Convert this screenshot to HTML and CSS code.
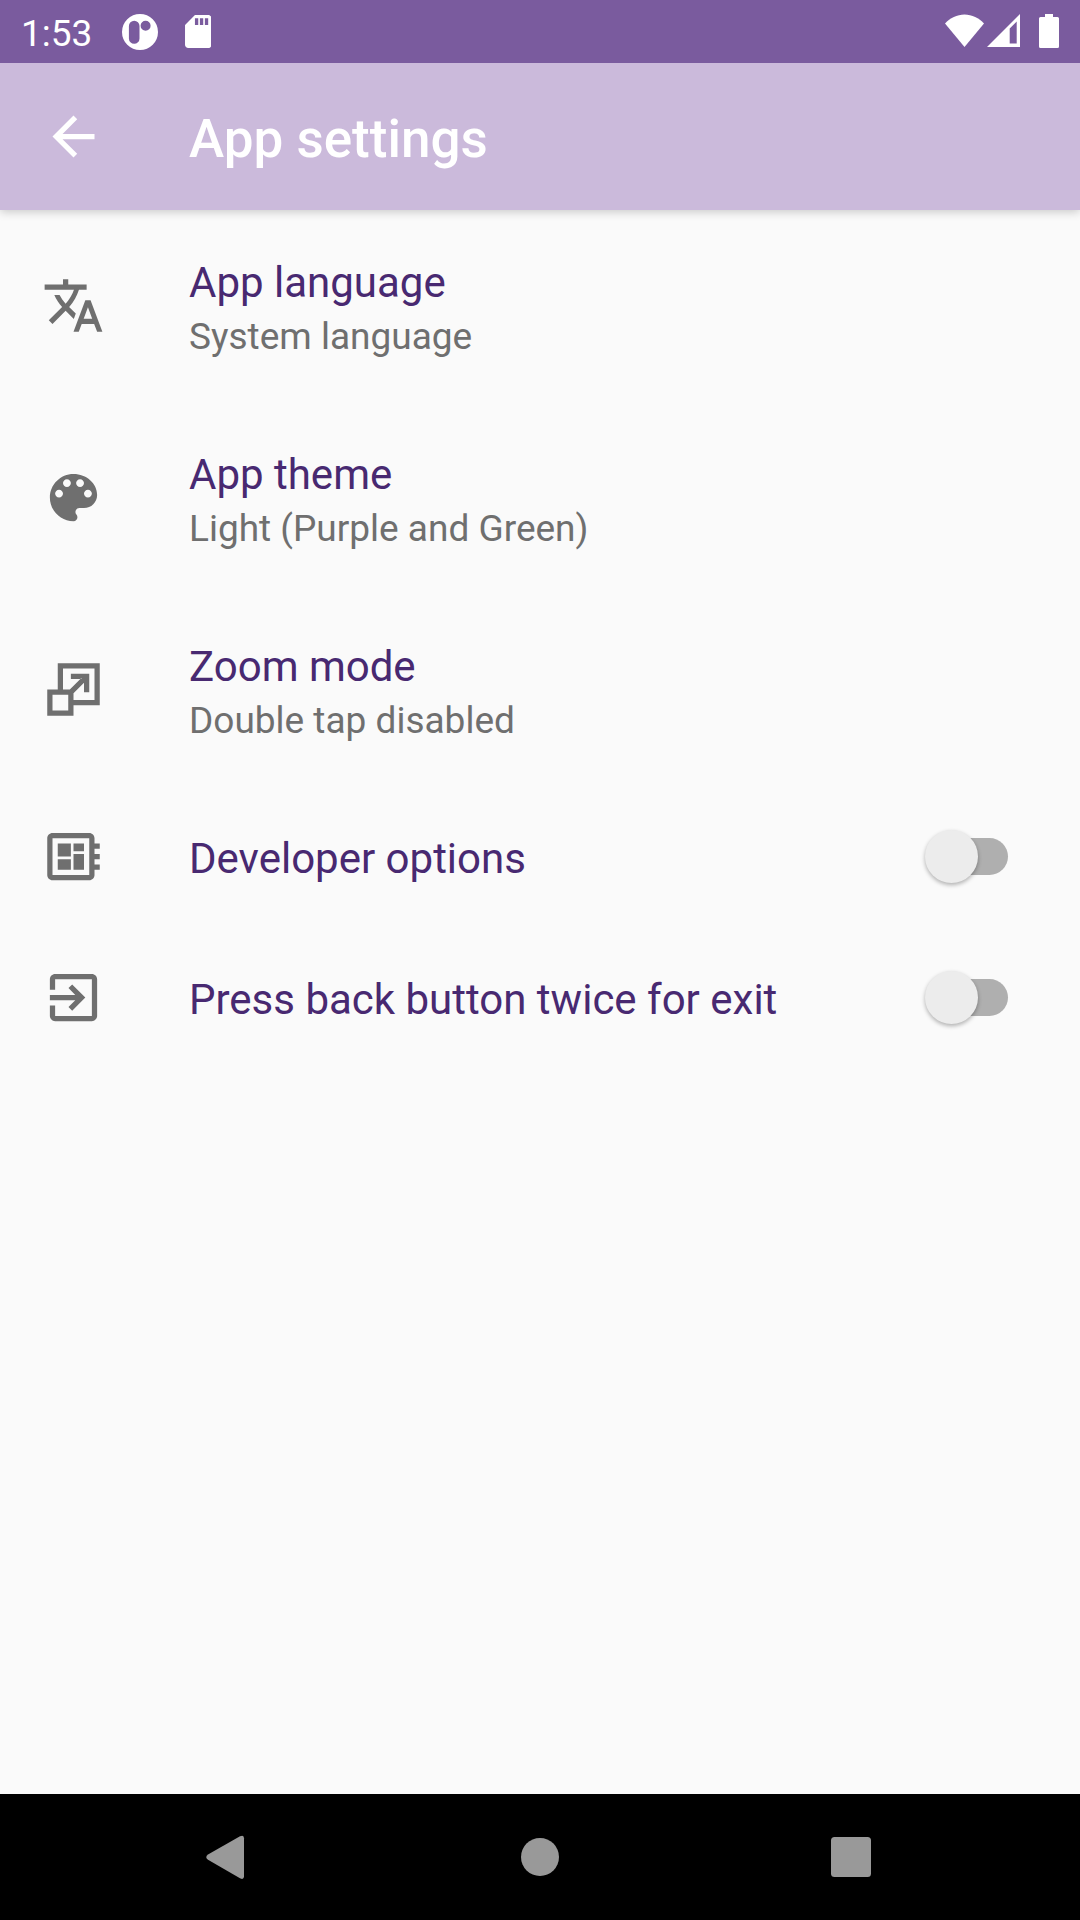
FILE: index.html
```
<!DOCTYPE html>
<html lang="en">
<head>
<meta charset="utf-8">
<title>App settings</title>
<link rel="stylesheet" href="styles.css">
</head>
<body>
<div class="screen">
  <div class="status-bar">
    <span class="clock">1:53</span>
    <svg class="status-app" viewBox="0 0 38 38"><path fill-rule="evenodd" d="M19 1a18 18 0 1 0 0 36a18 18 0 1 0 0-36zM13.2 7.7a5.3 5.3 0 0 1 5.3 5.3v12.5a5.3 5.3 0 0 1-10.6 0V13a5.3 5.3 0 0 1 5.3-5.3zM24.600 7.700a5 5 0 1 1 0 10a5 5 0 1 1 0-10z"/></svg>
    <svg class="status-sd" viewBox="4 2 16 20" preserveAspectRatio="none"><path d="M18 2h-8L4.020 8 4 20c0 1.100.900 2 2 2h12c1.100 0 2-.900 2-2V4c0-1.100-.900-2-2-2zm-6 6h-2V4h2v4zm3 0h-2V4h2v4zm3 0h-2V4h2v4z"/></svg>
    <div class="status-right">
      <svg class="status-wifi" viewBox="0 0 39 33"><path d="M19.500 33L0 9.500C5 4 12 .500 19.500 .500S34 4 39 9.500z"/></svg>
      <svg class="status-signal" viewBox="0 0 33 33"><path fill-rule="evenodd" d="M0 33L33 0v33zM22.700 14.500V29.500h7V7.500z"/></svg>
      <svg class="status-battery" viewBox="0 0 20 34"><path d="M6 0h8v3h4.500a1.500 1.500 0 0 1 1.500 1.500v28a1.500 1.500 0 0 1-1.500 1.500h-17A1.500 1.500 0 0 1 0 32.500v-28A1.500 1.500 0 0 1 1.500 3H6z"/></svg>
    </div>
  </div>

  <header class="app-bar">
    <svg class="icon" viewBox="0 0 24 24"><path d="M20 11H7.830l5.590-5.590L12 4l-8 8 8 8 1.410-1.410L7.830 13H20v-2z"/></svg>
    <h1 class="app-title">App settings</h1>
  </header>

  <main class="settings">
    <div class="row row-tall">
      <svg class="icon" viewBox="0 0 24 24"><path d="M12.870 15.070l-2.540-2.510.030-.030c1.740-1.940 2.980-4.170 3.710-6.530H17V4h-7V2H8v2H1v1.990h11.170C11.500 7.920 10.440 9.750 9 11.350 8.070 10.320 7.300 9.190 6.690 8h-2c.730 1.630 1.730 3.170 2.980 4.560l-5.090 5.020L4 19l5-5 3.110 3.110.760-2.040zM18.500 10h-2L12 22h2l1.120-3h4.750L21 22h2l-4.500-12zm-2.620 7l1.620-4.330L19.120 17h-3.240z"/></svg>
      <div class="text"><div class="label">App language</div><div class="summary">System language</div></div>
    </div>
    <div class="row row-tall">
      <svg class="icon" viewBox="0 0 24 24"><path d="M12 3c-4.970 0-9 4.030-9 9s4.030 9 9 9c.830 0 1.500-.670 1.500-1.500 0-.390-.150-.740-.390-1.010-.230-.260-.380-.610-.380-.990 0-.830.670-1.500 1.500-1.500H16c2.760 0 5-2.240 5-5 0-4.420-4.030-8-9-8zm-5.500 9c-.830 0-1.500-.670-1.500-1.500S5.670 9 6.500 9 8 9.670 8 10.500 7.330 12 6.500 12zm3-4C8.670 8 8 7.330 8 6.500S8.670 5 9.500 5s1.500.670 1.500 1.500S10.330 8 9.500 8zm5 0c-.830 0-1.500-.670-1.500-1.500S13.670 5 14.500 5s1.500.670 1.500 1.500S15.330 8 14.500 8zm3 4c-.830 0-1.500-.670-1.500-1.500S16.670 9 17.500 9s1.500.670 1.500 1.500-.670 1.500-1.500 1.500z"/></svg>
      <div class="text"><div class="label">App theme</div><div class="summary">Light (Purple and Green)</div></div>
    </div>
    <div class="row row-tall">
      <svg class="icon" viewBox="0 0 24 24"><path fill-rule="evenodd" d="M6 2h16v16H12v4H2V12h4V2zM8 4v8h2.590L15 7.590V8H11V6h7v7h-2V9.410l-4 4V16h8V4H8zM4 14v6h6v-6H4z"/></svg>
      <div class="text"><div class="label">Zoom mode</div><div class="summary">Double tap disabled</div></div>
    </div>
    <div class="row">
      <svg class="icon" viewBox="0 0 24 24"><path d="M22 9V7h-2V5c0-1.100-.900-2-2-2H4c-1.100 0-2 .900-2 2v14c0 1.100.900 2 2 2h14c1.100 0 2-.900 2-2v-2h2v-2h-2v-2h2v-2h-2V9h2zm-4 10H4V5h14v14zM6 13h5v4H6v-4zm6-6h4v3h-4V7zM6 7h5v5H6V7zm6 4h4v6h-4v-6z"/></svg>
      <div class="text"><div class="label">Developer options</div></div>
      <div class="switch"><span class="track"></span><span class="thumb"></span></div>
    </div>
    <div class="row">
      <svg class="icon" viewBox="0 0 24 24"><path d="M10.090 15.590L11.500 17l5-5-5-5-1.410 1.410L12.670 11H3v2h9.670l-2.580 2.590zM19 3H5c-1.110 0-2 .900-2 2v4h2V5h14v14H5v-4H3v4c0 1.100.890 2 2 2h14c1.100 0 2-.900 2-2V5c0-1.100-.900-2-2-2z"/></svg>
      <div class="text"><div class="label">Press back button twice for exit</div></div>
      <div class="switch"><span class="track"></span><span class="thumb"></span></div>
    </div>
  </main>

  <nav class="nav-bar">
    <svg class="nav-icon" viewBox="0 0 60 60"><path d="M13 27.500L45 9.300q4-2 4 2v38q0 4-4 2L13 32.800q-3.500-2.600 0-5.300z"/></svg>
    <svg class="nav-icon" viewBox="0 0 60 60"><circle cx="30" cy="30" r="19"/></svg>
    <svg class="nav-icon" viewBox="0 0 60 60"><rect x="10" y="10" width="40" height="40" rx="3.500"/></svg>
  </nav>
</div>
</body>
</html>
```
FILE: styles.css
```
* { box-sizing: border-box; }

body {
  margin: 0;
  font-family: Roboto, "Liberation Sans", sans-serif;
  background: #fafafa;
}

svg { display: block; flex: none; }

.screen {
  width: 1080px;
  height: 1920px;
  display: flex;
  flex-direction: column;
  overflow: hidden;
}

.status-bar {
  position: relative;
  z-index: 1;
  height: 63px;
  flex: none;
  display: flex;
  align-items: flex-start;
  padding: 0 21px;
  background: #7a5b9e;
  color: #fff;
  fill: #fff;
}

.clock {
  width: 100px;
  padding-top: 12px;
  font-size: 37px;
  line-height: 44px;
}

.status-app { width: 38px; height: 38px; margin-top: 12.500px; }
.status-sd { width: 26.500px; height: 33px; margin: 15px 0 0 25.500px; }
.status-right { display: flex; margin-left: auto; }
.status-wifi { width: 39px; height: 33px; margin: 14px 3px 0 0; }
.status-signal { width: 33px; height: 33px; margin: 14px 19px 0 0; }
.status-battery { width: 20px; height: 34px; margin-top: 14px; }

.icon { width: 63px; height: 63px; }

.app-bar {
  height: 147px;
  flex: none;
  display: flex;
  align-items: center;
  gap: 84px;
  padding-left: 42px;
  background: #cbbadb;
  color: #fff;
  fill: #fff;
  box-shadow: 0 2px 9px rgba(0, 0, 0, 0.2);
}

.app-title {
  margin: 0;
  padding-top: 4px;
  font-size: 53px;
  line-height: 62px;
  font-weight: 500;
}

.settings { flex: 1; }

.row {
  height: 141px;
  display: flex;
  align-items: center;
  gap: 84px;
  padding: 0 72px 0 42px;
  fill: #6f6f6f;
}

.row-tall { height: 192px; }
.row-tall .icon { margin-bottom: 1px; }

.text { flex: 1; padding-top: 4px; white-space: nowrap; }
.row-tall .text { padding-top: 3px; }

.label {
  font-size: 42px;
  line-height: 56px;
  color: #482971;
}

.summary {
  margin-top: 1px;
  font-size: 37px;
  line-height: 49px;
  color: #6f6f6f;
}

.switch {
  width: 83px;
  height: 53px;
  display: grid;
  align-items: center;
}

.track,
.thumb { grid-area: 1 / 1; }

.track {
  justify-self: end;
  width: 70px;
  height: 37px;
  border-radius: 18.500px;
  background: #afafaf;
}

.thumb {
  width: 53px;
  height: 53px;
  border-radius: 50%;
  background: #ececec;
  box-shadow: 0 2px 4px rgba(0, 0, 0, 0.3);
}

.nav-bar {
  height: 126px;
  flex: none;
  display: flex;
  justify-content: space-between;
  align-items: center;
  padding: 0 199px 0 195px;
  background: #000;
  fill: #999;
}

.nav-icon { width: 60px; height: 60px; }
.nav-icon:nth-child(2) { margin-left: 4px; }
```
